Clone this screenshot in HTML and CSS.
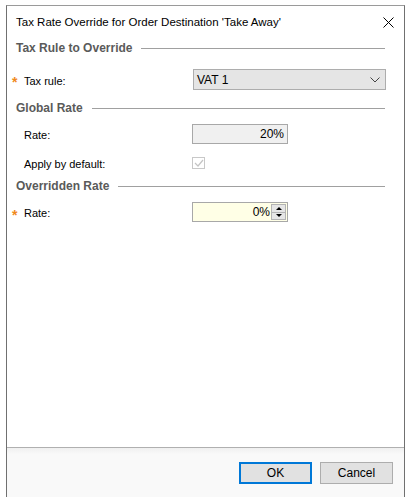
FILE: index.html
```html
<!DOCTYPE html>
<html lang="en">

<head>
    <meta charset="UTF-8">
    <title>Tax Rate Override</title>
    <link rel="stylesheet" href="styles.css">
</head>

<body>
    <div class="window">
        <div class="titlebar">
            <span class="title">Tax Rate Override for Order Destination 'Take Away'</span>
            <svg class="close" width="11" height="11" viewBox="0 0 11 11">
                <path d="M0.5 0.5 L10.5 10.5 M10.5 0.5 L0.5 10.5" stroke="#000" stroke-width="1" fill="none"/>
            </svg>
        </div>

        <div class="content">
            <div class="group-title first"><span>Tax Rule to Override</span></div>
            <div class="row row-select">
                <div class="label"><span class="req">*</span>Tax rule:</div>
                <div class="select">
                    <span>VAT 1</span>
                    <svg width="10" height="6" viewBox="0 0 10 6">
                        <path d="M0.5 0.5 L5 5 L9.5 0.5" stroke="#444" stroke-width="1" fill="none"/>
                    </svg>
                </div>
            </div>

            <div class="group-title"><span>Global Rate</span></div>
            <div class="row row-input">
                <div class="label"><span class="req"></span>Rate:</div>
                <div class="input readonly">20%</div>
            </div>
            <div class="row row-check">
                <div class="label"><span class="req"></span>Apply by default:</div>
                <div class="checkbox">
                    <svg width="10" height="10" viewBox="0 0 10 10">
                        <path d="M1 5 L4 8 L9 2" stroke="#c4c4c4" stroke-width="1.2" fill="none"/>
                    </svg>
                </div>
            </div>

            <div class="group-title after-check"><span>Overridden Rate</span></div>
            <div class="row row-input">
                <div class="label"><span class="req">*</span>Rate:</div>
                <div class="input editable">
                    <span class="value">0%</span>
                    <div class="spinner">
                        <div class="spin-btn"><span class="arrow-up"></span></div>
                        <div class="spin-btn"><span class="arrow-down"></span></div>
                    </div>
                </div>
            </div>
        </div>

        <div class="footer">
            <button class="btn default">OK</button>
            <button class="btn">Cancel</button>
        </div>
    </div>
</body>

</html>
```

FILE: styles.css
```css
/* Reset */
* {
    margin: 0;
    padding: 0;
    box-sizing: border-box;
}

body {
    background: #fff;
    font-family: 'Liberation Sans', Arial, sans-serif;
    font-size: 11px;
    color: #000;
}

/* Dialog window */
.window {
    margin: 5px 5px 0 6px;
    width: 399px;
    height: 492px;
    border: 1px solid #707070;
    border-top-color: #9a9a9a;
    border-bottom: none;
    display: flex;
    flex-direction: column;
    background: #fff;
}

.titlebar {
    height: 31px;
    display: flex;
    align-items: center;
    justify-content: space-between;
    padding: 0 10px 0 9px;
}

.title {
    font-family: 'Liberation Sans', Arial, sans-serif;
    font-size: 11.5px;
    color: #000;
}

.close {
    margin-top: 1px;
}

/* Content area */
.content {
    flex: 1;
}

.group-title {
    display: flex;
    align-items: center;
    height: 20px;
    margin: 8px 19px 0 9px;
    font-weight: bold;
    font-size: 12px;
    color: #5a5a5a;
}

.group-title.first {
    margin-top: 1px;
}

.group-title.after-check {
    margin-top: 6px;
}

.group-title::after {
    content: '';
    flex: 1;
    height: 1px;
    background: #a0a0a0;
    margin-left: 9px;
    margin-top: 1px;
}

.row {
    display: flex;
    align-items: center;
}

.row-select {
    margin-top: 11px;
}

.row-input {
    margin-top: 6px;
}

.row-check {
    margin-top: 12px;
}

.label {
    width: 185px;
    padding-left: 5px;
    display: flex;
    align-items: center;
    padding-top: 2px;
}

.req {
    width: 12px;
    color: #f08a1c;
    font-size: 14px;
    font-weight: bold;
    line-height: 10px;
    padding-top: 3px;
}

/* Combo box */
.select {
    margin-left: 1px;
    width: 193px;
    height: 21px;
    background: #e5e5e5;
    border: 1px solid #adadad;
    display: flex;
    align-items: center;
    justify-content: space-between;
    padding: 0 5px 0 3px;
    font-size: 12px;
}

/* Text inputs */
.input {
    width: 96px;
    height: 20px;
    border: 1px solid #a8a8a8;
    display: flex;
    align-items: center;
    justify-content: flex-end;
    font-size: 12px;
}

.input.readonly {
    background: #f0f0f0;
    padding-right: 3px;
}

.input.editable {
    background: #ffffe6;
    padding-right: 1px;
}

.value {
    margin-right: 1px;
}

.spinner {
    width: 15px;
    height: 16px;
    display: flex;
    flex-direction: column;
}

.spin-btn {
    flex: 1;
    background: #e6e6e6;
    border: 1px solid #b4b4b4;
    display: flex;
    align-items: center;
    justify-content: center;
}

.spin-btn + .spin-btn {
    border-top: none;
}

.arrow-up {
    border-left: 3px solid transparent;
    border-right: 3px solid transparent;
    border-bottom: 3px solid #000;
}

.arrow-down {
    border-left: 3px solid transparent;
    border-right: 3px solid transparent;
    border-top: 3px solid #000;
}

/* Checkbox */
.checkbox {
    width: 13px;
    height: 12px;
    border: 1px solid #c8c8c8;
    background: #fff;
    display: flex;
    align-items: center;
    justify-content: center;
}

/* Footer with buttons */
.footer {
    height: 50px;
    border-top: 1px solid #b0b0b0;
    background: linear-gradient(#f0f0f0, #f9f9f9 6px);
    display: flex;
    justify-content: flex-end;
    align-items: flex-start;
    gap: 8px;
    padding: 14px 11px 0 0;
}

.btn {
    width: 73px;
    height: 22px;
    background: #e1e1e1;
    border: 1px solid #adadad;
    font-family: 'Liberation Sans', Arial, sans-serif;
    font-size: 12px;
    color: #000;
}

.btn.default {
    border: 2px solid #0078d7;
}
```
